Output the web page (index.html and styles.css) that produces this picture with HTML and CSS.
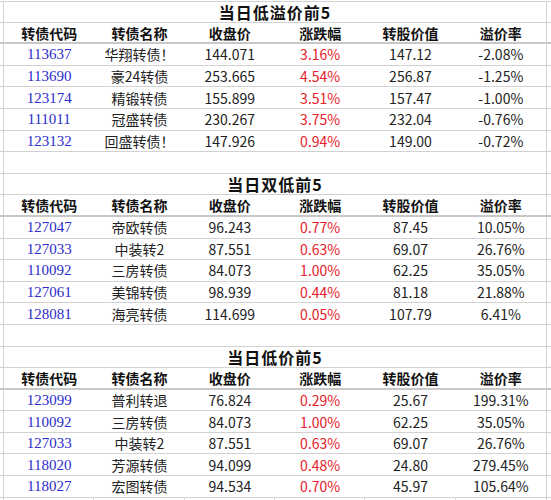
FILE: index.html
```html
<!DOCTYPE html>
<html lang="zh">
<head>
<meta charset="utf-8">
<title>可转债</title>
<link rel="stylesheet" href="styles.css">
</head>
<body>
<div class="sheet">
  <div class="row top"><span class="edge"></span><span class="title">当日低溢价前5</span><span class="edge r"></span></div>
  <div class="row head"><span class="edge"></span><span>转债代码</span><span>转债名称</span><span>收盘价</span><span>涨跌幅</span><span>转股价值</span><span>溢价率</span><span class="edge r"></span></div>
  <div class="row"><span class="edge"></span><span class="code">113637</span><span>华翔转债！</span><span>144.071</span><span class="up">3.16%</span><span>147.12</span><span>-2.08%</span><span class="edge r"></span></div>
  <div class="row"><span class="edge"></span><span class="code">113690</span><span>豪24转债</span><span>253.665</span><span class="up">4.54%</span><span>256.87</span><span>-1.25%</span><span class="edge r"></span></div>
  <div class="row"><span class="edge"></span><span class="code">123174</span><span>精锻转债</span><span>155.899</span><span class="up">3.51%</span><span>157.47</span><span>-1.00%</span><span class="edge r"></span></div>
  <div class="row"><span class="edge"></span><span class="code">111011</span><span>冠盛转债</span><span>230.267</span><span class="up">3.75%</span><span>232.04</span><span>-0.76%</span><span class="edge r"></span></div>
  <div class="row"><span class="edge"></span><span class="code">123132</span><span>回盛转债！</span><span>147.926</span><span class="up">0.94%</span><span>149.00</span><span>-0.72%</span><span class="edge r"></span></div>
  <div class="row blank"><span class="edge"></span><span class="fill"></span><span class="edge r"></span></div>

  <div class="row"><span class="edge"></span><span class="title">当日双低前5</span><span class="edge r"></span></div>
  <div class="row head"><span class="edge"></span><span>转债代码</span><span>转债名称</span><span>收盘价</span><span>涨跌幅</span><span>转股价值</span><span>溢价率</span><span class="edge r"></span></div>
  <div class="row"><span class="edge"></span><span class="code">127047</span><span>帝欧转债</span><span>96.243</span><span class="up">0.77%</span><span>87.45</span><span>10.05%</span><span class="edge r"></span></div>
  <div class="row"><span class="edge"></span><span class="code">127033</span><span>中装转2</span><span>87.551</span><span class="up">0.63%</span><span>69.07</span><span>26.76%</span><span class="edge r"></span></div>
  <div class="row"><span class="edge"></span><span class="code">110092</span><span>三房转债</span><span>84.073</span><span class="up">1.00%</span><span>62.25</span><span>35.05%</span><span class="edge r"></span></div>
  <div class="row"><span class="edge"></span><span class="code">127061</span><span>美锦转债</span><span>98.939</span><span class="up">0.44%</span><span>81.18</span><span>21.88%</span><span class="edge r"></span></div>
  <div class="row"><span class="edge"></span><span class="code">128081</span><span>海亮转债</span><span>114.699</span><span class="up">0.05%</span><span>107.79</span><span>6.41%</span><span class="edge r"></span></div>
  <div class="row blank"><span class="edge"></span><span class="fill"></span><span class="edge r"></span></div>

  <div class="row"><span class="edge"></span><span class="title">当日低价前5</span><span class="edge r"></span></div>
  <div class="row head"><span class="edge"></span><span>转债代码</span><span>转债名称</span><span>收盘价</span><span>涨跌幅</span><span>转股价值</span><span>溢价率</span><span class="edge r"></span></div>
  <div class="row"><span class="edge"></span><span class="code">123099</span><span>普利转退</span><span>76.824</span><span class="up">0.29%</span><span>25.67</span><span>199.31%</span><span class="edge r"></span></div>
  <div class="row"><span class="edge"></span><span class="code">110092</span><span>三房转债</span><span>84.073</span><span class="up">1.00%</span><span>62.25</span><span>35.05%</span><span class="edge r"></span></div>
  <div class="row"><span class="edge"></span><span class="code">127033</span><span>中装转2</span><span>87.551</span><span class="up">0.63%</span><span>69.07</span><span>26.76%</span><span class="edge r"></span></div>
  <div class="row"><span class="edge"></span><span class="code">118020</span><span>芳源转债</span><span>94.099</span><span class="up">0.48%</span><span>24.80</span><span>279.45%</span><span class="edge r"></span></div>
  <div class="row"><span class="edge"></span><span class="code">118027</span><span>宏图转债</span><span>94.534</span><span class="up">0.70%</span><span>45.97</span><span>105.64%</span><span class="edge r"></span></div>
  <div class="row grid"><span class="edge"></span><span class="vr"></span><span class="vr"></span><span class="vr"></span><span class="vr"></span><span class="vr"></span><span></span><span class="edge r"></span></div>
</div>
</body>
</html>
```

FILE: styles.css
```css
html, body {
  margin: 0;
  padding: 0;
  background: #ffffff;
}
.sheet {
  width: 551px;
  height: 500px;
  overflow: hidden;
  padding-top: 1px;
  font-family: "Noto Sans CJK SC", "Noto Sans", sans-serif;
  font-size: 14px;
  color: #222222;
}
.row {
  display: grid;
  grid-template-columns: 4px repeat(6, 1fr) 5px;
  height: 21.6px;
  box-sizing: border-box;
  border-bottom: 1px solid #d2d2d2;
  align-items: center;
  text-align: center;
  line-height: 20px;
}
.row.top {
  border-top: 1px solid #d2d2d2;
}
.row > span {
  white-space: nowrap;
}
.edge {
  align-self: stretch;
  border-right: 1px solid #d2d2d2;
}
.edge.r {
  border-right: none;
  border-left: 1px solid #d2d2d2;
}
.title {
  grid-column: 2 / span 6;
  font-size: 16px;
  font-weight: bold;
  color: #111111;
  letter-spacing: 1px;
}
.fill {
  grid-column: 2 / span 6;
}
.head {
  border-bottom: 2px solid #c8c8c8;
}
.head > span {
  font-weight: bold;
  color: #111111;
}
.code {
  font-family: "Liberation Serif", "DejaVu Serif", serif;
  font-size: 15px;
  color: #2b2bcc;
}
.up {
  color: #e8202a;
}
.grid .vr {
  align-self: stretch;
  border-right: 1px solid #d2d2d2;
}
```
